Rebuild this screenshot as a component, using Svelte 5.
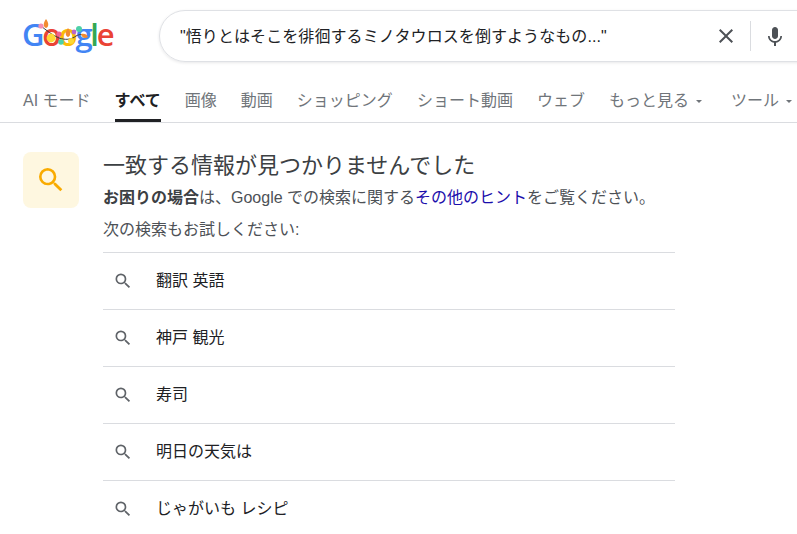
<script>
  const tabs = [
    { label: "AI モード" },
    { label: "すべて", active: true },
    { label: "画像" },
    { label: "動画" },
    { label: "ショッピング" },
    { label: "ショート動画" },
    { label: "ウェブ" },
    { label: "もっと見る", caret: true },
    { label: "ツール", caret: true }
  ];

  const suggestions = ["翻訳 英語", "神戸 観光", "寿司", "明日の天気は", "じゃがいも レシピ"];
  const searchPath = "M15.5 14h-.79l-.28-.27A6.47 6.47 0 0 0 16 9.5 6.5 6.5 0 1 0 9.5 16c1.61 0 3.09-.59 4.23-1.57l.27.28v.79l5 4.99L20.49 19l-4.99-5zm-6 0C7.01 14 5 11.99 5 9.5S7.01 5 9.5 5 14 7.01 14 9.5 11.99 14 9.5 14z";
</script>

<div class="page">
  <header class="top">
    <div class="logo">
      <span class="blue">G</span><span class="red">o</span><span class="yellow">o</span><span class="blue">g</span><span class="green">l</span><span class="red">e</span>
      <svg class="lights" width="90" height="34" viewBox="0 0 90 34">
        <path d="M19 10 C24 14 30 19 37 22 C43 24 49 24 54 20 C58 18 60 18 63 20" fill="none" stroke="#3c4043" stroke-width="1"/>
        <path d="M24 3 C21 7 21 11 24 12 C27 11 27 7 24 3z" fill="#f28b30"/>
        <circle cx="19" cy="10" r="2.6" fill="#f48fb1"/>
        <circle cx="29" cy="22" r="4.4" fill="#fdd835"/>
        <circle cx="37" cy="18" r="2.6" fill="#f06292"/>
        <circle cx="39" cy="26" r="2.8" fill="#4dd0a8"/>
        <path d="M46 12 C43 16 43 20 46 21 C49 20 49 16 46 12z" fill="#f28b30"/>
        <circle cx="52" cy="16" r="2.4" fill="#ba68c8"/>
        <circle cx="49" cy="25" r="3" fill="#fdd835"/>
        <circle cx="57" cy="13" r="3" fill="#4dd0a8"/>
        <path d="M59 18 C62 17 65 18 66 21 C63 23 60 22 59 18z" fill="#f28b30"/>
      </svg>
    </div>
    <div class="searchbox">
      <span class="query">"悟りとはそこを徘徊するミノタウロスを倒すようなもの..."</span>
      <svg class="clear" width="24" height="24" viewBox="0 0 24 24">
        <path d="M19 6.41 17.59 5 12 10.59 6.41 5 5 6.41 10.59 12 5 17.59 6.41 19 12 13.41 17.59 19 19 17.59 13.41 12z" fill="#4d5156"/>
      </svg>
      <span class="sep"></span>
      <svg class="mic" width="24" height="24" viewBox="0 0 24 24">
        <path d="M12 15c1.66 0 3-1.31 3-2.97V6c0-1.66-1.34-3-3-3S9 4.34 9 6v6.03C9 13.69 10.34 15 12 15z" fill="#4d5156"/>
        <path d="M17.3 12c0 3-2.54 5.1-5.3 5.1S6.7 15 6.7 12H5c0 3.41 2.72 6.23 6 6.72V22h2v-3.28c3.28-.49 6-3.31 6-6.72h-1.7z" fill="#4d5156"/>
      </svg>
    </div>
  </header>

  <nav class="tabs">
    {#each tabs as tab}
      <span class="tab" class:active={tab.active}>
        {tab.label}
        {#if tab.caret}<i class="caret"></i>{/if}
      </span>
    {/each}
  </nav>

  <main class="result">
    <div class="badge">
      <svg width="32" height="32" viewBox="0 0 24 24"><path d={searchPath} fill="#f9ab00"/></svg>
    </div>
    <div class="body">
      <h2>一致する情報が見つかりませんでした</h2>
      <p class="hint"><b>お困りの場合</b>は、Google での検索に関する<span class="link">その他のヒント</span>をご覧ください。</p>
      <p class="try">次の検索もお試しください:</p>
      <ul>
        {#each suggestions as s}
          <li>
            <svg width="20" height="20" viewBox="0 0 24 24"><path d={searchPath} fill="#5f6368"/></svg>
            <span>{s}</span>
          </li>
        {/each}
      </ul>
    </div>
  </main>
</div>

<style>
  :global(body) {
    margin: 0;
    background: #fff;
    overflow: hidden;
  }

  .page {
    width: 797px;
    height: 534px;
    overflow: hidden;
    font-family: "Liberation Sans", "Noto Sans CJK JP", sans-serif;
    color: #202124;
  }

  .top {
    display: flex;
    align-items: flex-start;
    padding: 10px 0 0 23px;
    height: 52px;
  }

  .logo {
    position: relative;
    width: 90px;
    margin-top: 6px;
    margin-left: -1px;
    margin-right: 47px;
    flex: none;
    font-family: "Open Sans", sans-serif;
    font-size: 31px;
    line-height: 36px;
    letter-spacing: -2.3px;
    white-space: nowrap;
    font-weight: 600;
  }

  .lights {
    position: absolute;
    left: 0;
    top: 0;
  }

  .blue { color: #4285f4; }
  .red { color: #ea4335; }
  .yellow { color: #fbbc05; }
  .green { color: #34a853; }

  .searchbox {
    flex: none;
    box-sizing: border-box;
    width: 692px;
    height: 52px;
    border: 1px solid #dfe1e5;
    border-radius: 26px;
    display: flex;
    align-items: center;
    padding-left: 20px;
    box-shadow: 0 1px 3px rgba(32, 33, 36, 0.1);
  }

  .query {
    width: 534px;
    flex: none;
    font-size: 16px;
    letter-spacing: 0.08px;
    white-space: nowrap;
    color: #202124;
    margin-bottom: 2px;
  }

  .clear {
    flex: none;
    margin-right: 12px;
  }

  .sep {
    width: 1px;
    height: 30px;
    background: #dadce0;
    flex: none;
    margin-right: 12px;
  }

  .mic {
    flex: none;
  }

  .tabs {
    display: flex;
    gap: 24px;
    padding-left: 23px;
    margin-top: 19px;
    height: 41px;
    border-bottom: 1px solid #dadce0;
    white-space: nowrap;
  }

  .tab {
    font-size: 16px;
    line-height: 36px;
    height: 36px;
    padding-top: 2px;
    color: #70757a;
    border-bottom: 3px solid transparent;
    display: flex;
    align-items: center;
    gap: 6px;
  }

  .tab.active {
    color: #202124;
    font-weight: 700;
    border-bottom-color: #202124;
  }

  .caret {
    width: 0;
    height: 0;
    border-left: 3px solid transparent;
    border-right: 3px solid transparent;
    border-top: 3px solid #70757a;
    margin-left: 1px;
    margin-right: 5px;
  }

  .result {
    display: flex;
    padding: 29px 0 0 23px;
  }

  .badge {
    width: 56px;
    height: 56px;
    background: #fef7e0;
    border-radius: 8px;
    display: flex;
    align-items: center;
    justify-content: center;
    flex: none;
    margin-right: 24px;
  }

  .body {
    width: 572px;
    flex: none;
  }

  h2 {
    margin: 0;
    font-size: 22px;
    font-weight: 400;
    line-height: 28px;
    color: #3c4043;
  }

  p {
    margin: 0;
    font-size: 16px;
    line-height: 26px;
    color: #4d5156;
    white-space: nowrap;
  }

  .hint {
    margin-top: 5px;
  }

  .hint b {
    color: #3c4043;
  }

  .link {
    color: #1a0dab;
  }

  .try {
    margin-top: 6px;
  }

  ul {
    list-style: none;
    margin: 0;
    padding: 0;
    margin-top: 9px;
  }

  li {
    height: 56px;
    border-top: 1px solid #dadce0;
    display: flex;
    align-items: center;
    padding-left: 10px;
    font-size: 16px;
    color: #202124;
  }

  li span {
    margin-bottom: 4px;
  }

  li svg {
    margin-right: 23px;
    flex: none;
  }
</style>
